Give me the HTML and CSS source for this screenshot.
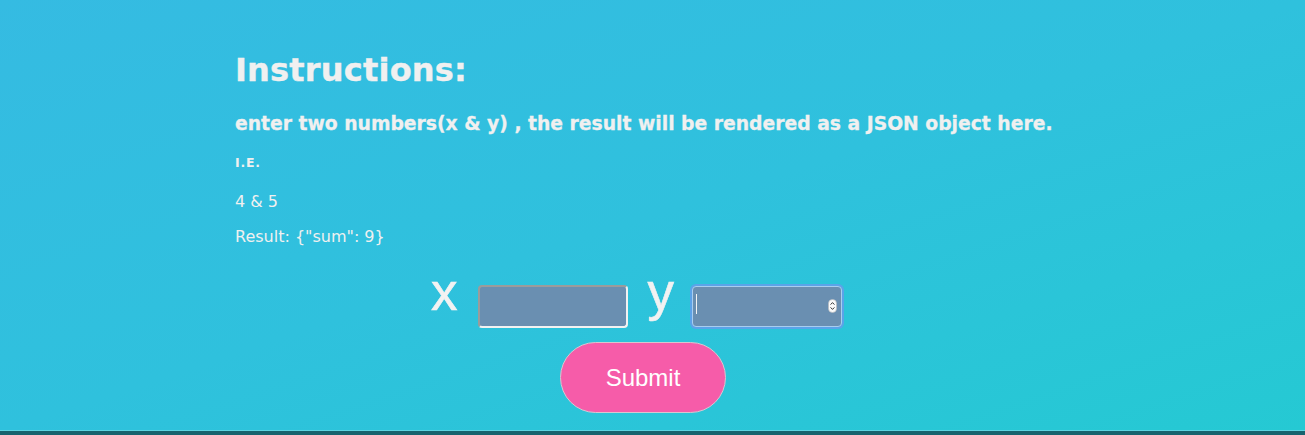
FILE: index.html
```html
<!DOCTYPE html>
<html>
<head>
<meta charset="utf-8">
<title>Sum</title>
<link rel="stylesheet" href="styles.css">
</head>
<body>
<div class="page">
  <div class="container">
    <h1 class="title">Instructions:</h1>
    <h3 class="lead">enter two numbers(x &amp; y) , the result will be rendered as a JSON object here.</h3>
    <h5 class="ie">I.E.</h5>
    <p class="example">4 &amp; 5</p>
    <p class="example result">Result: {"sum": 9}</p>
    <form class="calc">
      <div class="row">
        <label class="var" for="x">x</label>
        <input class="num" id="x" type="text">
        <label class="var var-y" for="y">y</label>
        <span class="field focused">
          <input class="num" id="y" type="text">
          <span class="caret"></span>
          <span class="spin"><svg width="9" height="14" viewBox="0 0 9 14"><rect x="0.5" y="0.5" width="8" height="13" rx="4" fill="#fafafa" stroke="#bbb" stroke-width="0.6"/><path d="M2.6 5.6 L4.5 3.6 L6.4 5.6" fill="none" stroke="#333" stroke-width="1"/><path d="M2.6 8.4 L4.5 10.4 L6.4 8.4" fill="none" stroke="#333" stroke-width="1"/></svg></span>
        </span>
      </div>
      <button class="submit" type="button">Submit</button>
    </form>
  </div>
</div>
</body>
</html>
```
FILE: styles.css
```css
html, body {
  margin: 0;
  padding: 0;
}
body {
  background: #17636e;
  font-family: "DejaVu Sans", Verdana, sans-serif;
  color: #f0f0f0;
}
.page {
  height: 430px;
  background: linear-gradient(to bottom right, #35bbe2 0%, #2fc1dd 50%, #25c9d3 100%);
  border-bottom: 1px solid #5ad5e2;
  overflow: hidden;
}
.container {
  width: 835px;
  margin: 0 auto;
  padding-top: 51px;
  display: flex;
  flex-direction: column;
  align-items: flex-start;
}
.title {
  margin: 0;
  font-size: 32px;
  line-height: 38px;
  font-weight: bold;
  letter-spacing: 0.2px;
  -webkit-text-stroke: 0.4px #f0f0f0;
}
.lead {
  margin: 24px 0 0;
  font-size: 18.75px;
  line-height: 22px;
  font-weight: bold;
  white-space: nowrap;
  -webkit-text-stroke: 0.3px #f0f0f0;
}
.ie {
  margin: 21px 0 0;
  font-size: 12.5px;
  line-height: 13px;
  font-weight: bold;
  letter-spacing: 0.8px;
}
.example {
  margin: 23px 0 0;
  font-size: 16px;
  line-height: 19px;
}
.result {
  margin-top: 16px;
}
.calc {
  display: flex;
  flex-direction: column;
  align-items: flex-start;
  margin-top: 21px;
}
.row {
  display: flex;
  align-items: flex-start;
  margin-left: 196px;
}
.var {
  font-family: "Liberation Sans", Arial, sans-serif;
  font-size: 53px;
  line-height: 50px;
  margin-right: 20px;
  color: #f2f2f2;
  -webkit-text-stroke: 0.6px #f2f2f2;
}
.var-y {
  margin-right: 17px;
}
.num {
  box-sizing: border-box;
  width: 150px;
  height: 43px;
  margin: 18px 20px 0 0;
  padding: 0 6px;
  background: #6a8fb1;
  border: 2px solid;
  border-color: #9b9b9b #f2f2f2 #f2f2f2 #9b9b9b;
  border-radius: 4px;
  outline: none;
  color: #fff;
  font-size: 16px;
}
.field {
  position: relative;
  display: block;
  margin-top: 18px;
}
.field .num {
  width: 150px;
  height: 41px;
  margin: 1px;
  border: 1px solid #a8cdf0;
  box-shadow: 0 0 0 2px #5ba3e8;
}
.caret {
  position: absolute;
  left: 5px;
  top: 9px;
  width: 1px;
  height: 20px;
  background: #f4f4f4;
}
.spin {
  position: absolute;
  right: 6px;
  top: 14px;
  width: 9px;
  height: 14px;
  display: block;
}
.spin svg {
  display: block;
}
.submit {
  box-sizing: border-box;
  width: 166px;
  height: 71px;
  margin: 14px 0 0 325px;
  background: #f65ca9;
  border: 1px solid #d9c6d0;
  border-radius: 36px;
  color: #fff;
  font-family: "Liberation Sans", Arial, sans-serif;
  font-size: 24px;
  padding: 0;
  cursor: pointer;
}
```
